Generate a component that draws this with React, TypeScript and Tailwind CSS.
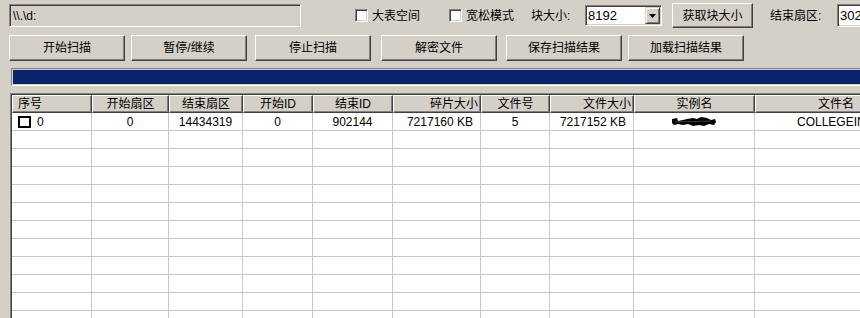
import React from "react";

const cols = [
  { name: "序号", w: "w-[80px]", h: "justify-start pl-[5px]" },
  { name: "开始扇区", w: "w-[77px]", h: "justify-center" },
  { name: "结束扇区", w: "w-[74px]", h: "justify-center" },
  { name: "开始ID", w: "w-[70px]", h: "justify-center" },
  { name: "结束ID", w: "w-[80px]", h: "justify-center" },
  { name: "碎片大小", w: "w-[88px]", h: "justify-end pr-[2px]" },
  { name: "文件号", w: "w-[69px]", h: "justify-center" },
  { name: "文件大小", w: "w-[84px]", h: "justify-end pr-[2px]" },
  { name: "实例名", w: "w-[121px]", h: "justify-center" },
  { name: "文件名", w: "w-[162px]", h: "justify-center" },
];

const dataAlign = [
  "justify-start pl-[6px]",
  "justify-center",
  "justify-center",
  "justify-center",
  "justify-center",
  "justify-end pr-[7px]",
  "justify-center",
  "justify-end pr-[7px]",
  "justify-center",
  "justify-start pl-[42px]",
];

function ClassicCheck() {
  return (
    <div className="w-[13px] h-[13px] shrink-0 bg-white border border-t-[#808080] border-l-[#808080] border-r-white border-b-white shadow-[inset_1px_1px_0_#404040,inset_-1px_-1px_0_#d4d0c8]" />
  );
}

function Redacted() {
  return (
    <svg width="46" height="11" viewBox="0 0 46 11">
      <path
        d="M1 3 L6 2 L7 5 L12 4 L16 3 L22 2 L26 3 L30 1 L36 2 L40 4 L44 3 L45 6 L43 9 L38 8 L33 10 L28 9 L22 10 L17 8 L12 9 L7 8 L3 9 L1 7 Z"
        fill="#000"
      />
      <path d="M4 6 L40 5" stroke="#fff" strokeWidth="0.6" opacity="0.4" />
    </svg>
  );
}

const row1 = [
  "",
  "0",
  "14434319",
  "0",
  "902144",
  "7217160 KB",
  "5",
  "7217152 KB",
  "",
  "COLLEGEINFO.DBF",
];

export default function App() {
  const rows = Array.from({ length: 11 });
  return (
    <div
      className="w-[860px] h-[318px] overflow-hidden bg-[#d4d0c8] text-black text-[12px] leading-none"
      style={{ fontFamily: '"Liberation Sans", "Noto Sans CJK SC", sans-serif' }}
    >
      {/* Row 1 */}
      <div className="flex items-center h-[25px] mt-[3px] whitespace-nowrap">
        <div className="ml-[9px] w-[292px] h-[23px] shrink-0 flex items-center pl-[3px] bg-[#d4d0c8] border border-t-[#808080] border-l-[#808080] border-r-white border-b-white shadow-[inset_1px_1px_0_#404040,inset_-1px_-1px_0_#d4d0c8]">
          {"\\\\.\\d:"}
        </div>
        <div className="ml-[54px] w-[94px] shrink-0 flex items-center">
          <ClassicCheck />
          <span className="ml-[4px]">大表空间</span>
        </div>
        <div className="w-[82px] shrink-0 flex items-center">
          <ClassicCheck />
          <span className="ml-[4px]">宽松模式</span>
        </div>
        <div className="w-[54px] shrink-0">块大小:</div>
        <div className="w-[77px] h-[21px] shrink-0 flex items-stretch bg-white border border-t-[#808080] border-l-[#808080] border-r-white border-b-white shadow-[inset_1px_1px_0_#404040,inset_-1px_-1px_0_#d4d0c8] p-[1px]">
          <div className="flex-1 flex items-center pl-[1px] text-[13px]">8192</div>
          <div className="w-[15px] shrink-0 bg-[#d4d0c8] flex items-center justify-center border border-t-[#d4d0c8] border-l-[#d4d0c8] border-r-[#404040] border-b-[#404040] shadow-[inset_1px_1px_0_white,inset_-1px_-1px_0_#808080]">
            <svg width="7" height="4" viewBox="0 0 7 4">
              <path d="M0 0 H7 L3.5 4 Z" fill="#000" />
            </svg>
          </div>
        </div>
        <button className="ml-[10px] w-[81px] h-[25px] shrink-0 bg-[#d4d0c8] border border-t-white border-l-white border-r-[#404040] border-b-[#404040] shadow-[inset_-1px_-1px_0_#808080]">
          获取块大小
        </button>
        <div className="ml-[17px] w-[67px] shrink-0">结束扇区:</div>
        <div className="w-[40px] h-[23px] shrink-0 flex items-center pl-[2px] bg-white border border-t-[#808080] border-l-[#808080] border-r-white border-b-white shadow-[inset_1px_1px_0_#404040,inset_-1px_-1px_0_#d4d0c8] text-[13px]">
          30200
        </div>
      </div>

      {/* Row 2 buttons */}
      <div className="flex mt-[7px] h-[26px] whitespace-nowrap">
        <button className="ml-[9px] w-[116px] h-[26px] shrink-0 bg-[#d4d0c8] border border-t-white border-l-white border-r-[#404040] border-b-[#404040] shadow-[inset_-1px_-1px_0_#808080]">开始扫描</button>
        <button className="ml-[6px] w-[116px] h-[26px] shrink-0 bg-[#d4d0c8] border border-t-white border-l-white border-r-[#404040] border-b-[#404040] shadow-[inset_-1px_-1px_0_#808080]">暂停/继续</button>
        <button className="ml-[8px] w-[116px] h-[26px] shrink-0 bg-[#d4d0c8] border border-t-white border-l-white border-r-[#404040] border-b-[#404040] shadow-[inset_-1px_-1px_0_#808080]">停止扫描</button>
        <button className="ml-[10px] w-[116px] h-[26px] shrink-0 bg-[#d4d0c8] border border-t-white border-l-white border-r-[#404040] border-b-[#404040] shadow-[inset_-1px_-1px_0_#808080]">解密文件</button>
        <button className="ml-[9px] w-[116px] h-[26px] shrink-0 bg-[#d4d0c8] border border-t-white border-l-white border-r-[#404040] border-b-[#404040] shadow-[inset_-1px_-1px_0_#808080]">保存扫描结果</button>
        <button className="ml-[6px] w-[116px] h-[26px] shrink-0 bg-[#d4d0c8] border border-t-white border-l-white border-r-[#404040] border-b-[#404040] shadow-[inset_-1px_-1px_0_#808080]">加载扫描结果</button>
      </div>

      {/* Progress bar */}
      <div className="ml-[11px] mt-[7px] w-[860px] h-[18px] border border-t-[#808080] border-l-[#808080] border-r-white border-b-white p-[1px]">
        <div className="w-full h-full bg-[#0a246a]" />
      </div>

      {/* Table */}
      <div className="ml-[10px] mt-[7px] w-[900px] h-[240px] bg-white border border-t-[#808080] border-l-[#808080] border-r-white border-b-white shadow-[inset_1px_1px_0_#404040] pl-[1px] pt-[1px]">
        <div className="flex h-[18px] whitespace-nowrap">
          {cols.map((c) => (
            <div
              key={c.name}
              className={`${c.w} ${c.h} shrink-0 h-[18px] flex items-center bg-[#d4d0c8] border border-t-white border-l-white border-r-[#404040] border-b-[#404040] shadow-[inset_-1px_-1px_0_#808080]`}
            >
              {c.name}
            </div>
          ))}
        </div>
        <div className="flex h-[18px] whitespace-nowrap border-b border-[#c8c8c8]">
          {cols.map((c, i) => (
            <div
              key={c.name}
              className={`${c.w} ${dataAlign[i]} shrink-0 h-[17px] flex items-center border-r border-[#c8c8c8]`}
            >
              {i === 0 ? (
                <>
                  <div className="w-[13px] h-[12px] border-2 border-black" />
                  <span className="ml-[6px]">0</span>
                </>
              ) : i === 8 ? (
                <Redacted />
              ) : (
                row1[i]
              )}
            </div>
          ))}
        </div>
        {rows.map((_, r) => (
          <div key={r} className="flex h-[18px] border-b border-[#c8c8c8]">
            {cols.map((c) => (
              <div key={c.name} className={`${c.w} shrink-0 h-[17px] border-r border-[#c8c8c8]`} />
            ))}
          </div>
        ))}
      </div>
    </div>
  );
}
